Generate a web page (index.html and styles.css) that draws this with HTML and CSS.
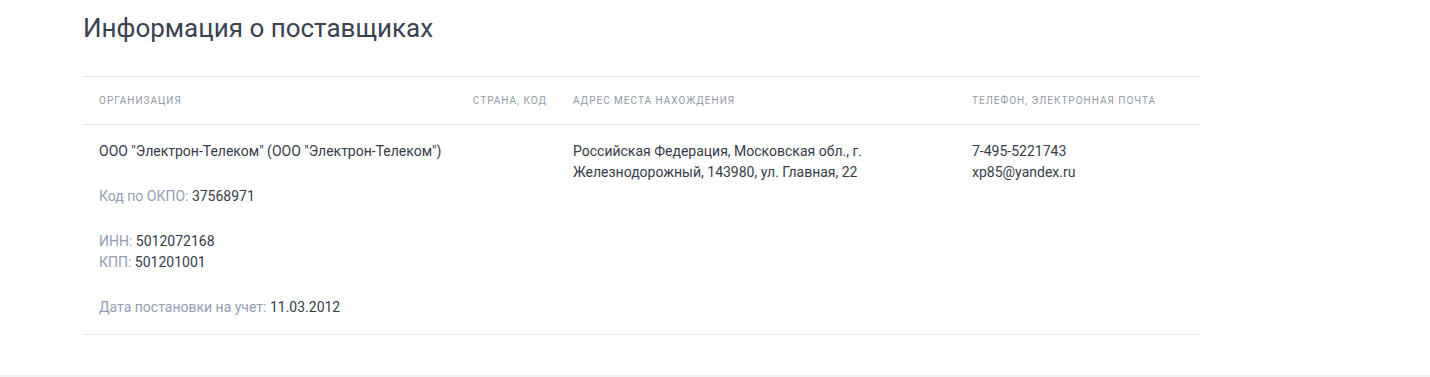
FILE: index.html
```html
<!DOCTYPE html>
<html lang="ru">
<head>
<meta charset="utf-8">
<title>Информация о поставщиках</title>
<link rel="stylesheet" href="styles.css">
</head>
<body>
<section class="section">
  <h2 class="title">Информация о поставщиках</h2>
  <div class="table">
    <div class="row head">
      <div class="cell c-org">Организация</div>
      <div class="cell c-country">Страна, код</div>
      <div class="cell c-addr">Адрес места нахождения</div>
      <div class="cell c-contact">Телефон, электронная почта</div>
    </div>
    <div class="row body">
      <div class="cell c-org">
        <p class="para nowrap">ООО "Электрон-Телеком" (ООО "Электрон-Телеком")</p>
        <p class="para"><span class="label">Код по ОКПО:</span> 37568971</p>
        <p class="para"><span class="label">ИНН:</span> 5012072168<br><span class="label">КПП:</span> 501201001</p>
        <p class="para"><span class="label">Дата постановки на учет:</span> 11.03.2012</p>
      </div>
      <div class="cell c-country"></div>
      <div class="cell c-addr">Российская Федерация, Московская обл., г. Железнодорожный, 143980, ул. Главная, 22</div>
      <div class="cell c-contact">7-495-5221743<br>xp85@yandex.ru</div>
    </div>
  </div>
</section>
<div class="footer-band"></div>
</body>
</html>
```
FILE: styles.css
```css
html, body {
  margin: 0;
  padding: 0;
  background: #ffffff;
  font-family: Roboto, "Liberation Sans", Arial, sans-serif;
  color: #363c49;
}

.section {
  padding: 12px 230px 40px 83px;
  border-bottom: 1px solid #f0f0f0;
}

.title {
  margin: 0;
  font-size: 26px;
  font-weight: 400;
  line-height: 32px;
  color: #3a4150;
}

.table {
  margin-top: 32px;
  width: 1117px;
}

.row {
  display: flex;
  border-top: 1px solid #e8e9eb;
}

.row.body {
  border-bottom: 1px solid #e8e9eb;
}

.cell {
  box-sizing: border-box;
  padding: 0 16px;
}

.c-org { width: 374px; }
.c-country { width: 100px; }
.c-addr { width: 399px; }
.c-contact { width: 244px; }

.head .cell {
  height: 47px;
  display: flex;
  align-items: center;
  font-size: 10px;
  text-transform: uppercase;
  letter-spacing: 1px;
  color: #939aa6;
  white-space: nowrap;
}

.head .c-country {
  padding-right: 10px;
  justify-content: flex-end;
}

.body .cell {
  padding-top: 16px;
  padding-bottom: 16px;
  font-size: 14px;
  line-height: 21px;
  color: #363c49;
}

.para {
  margin: 0 0 24px;
}

.para:last-child {
  margin-bottom: 0;
}

.nowrap {
  white-space: nowrap;
}

.label {
  color: #929eb1;
}

.footer-band {
  height: 3px;
  background: #f2f2f2;
}
```
